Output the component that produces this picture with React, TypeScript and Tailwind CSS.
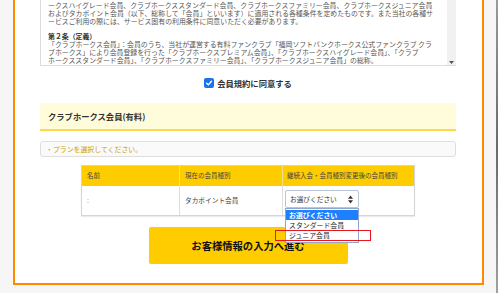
import React from "react";

const jp = { fontFamily: '"Noto Sans CJK JP", "Noto Sans", sans-serif' };

export default function App() {
  return (
    <div className="w-[500px] h-[293px] bg-[#f6f6f6] flex overflow-hidden" style={jp}>
      <div className="w-[13px] shrink-0" />
      <div className="w-[471px] h-[285px] shrink-0 bg-white border-l-2 border-r-2 border-b-2 border-[#ff8a00] box-border px-[25px] pr-[26px] flex flex-col">
        {/* terms box */}
        <div className="h-[66px] shrink-0 flex border-l border-b border-[#dcdcdc] overflow-hidden">
          <div className="flex-1 pl-[7px] pt-[1px] text-[6.9px] leading-[8px] text-[#555] whitespace-nowrap overflow-hidden">
            <div>ークスハイグレード会員、クラブホークススタンダード会員、クラブホークスファミリー会員、クラブホークスジュニア会員</div>
            <div>およびタカポイント会員（以下、総称して「会員」といいます）に適用される各種条件を定めたものです。また当社の各種サ</div>
            <div>ービスご利用の際には、サービス固有の利用条件に同意いただく必要があります。</div>
            <div className="mt-[7px] font-bold text-[#333]">第２条（定義）</div>
            <div>「クラブホークス会員」：会員のうち、当社が運営する有料ファンクラブ「福岡ソフトバンクホークス公式ファンクラブ クラ</div>
            <div>ブホークス」により会員登録を行った「クラブホークスプレミアム会員」、「クラブホークスハイグレード会員」、「クラブ</div>
            <div>ホークススタンダード会員」、「クラブホークスファミリー会員」、「クラブホークスジュニア会員」の総称。</div>
          </div>
          <div className="w-[9px] shrink-0 bg-[#f1f1f1] flex flex-col justify-end items-center pb-[1px]">
            <svg width="5" height="3" viewBox="0 0 5 3"><path d="M0 0 L5 0 L2.5 3 Z" fill="#555" /></svg>
          </div>
        </div>

        {/* agree checkbox */}
        <div className="mt-[11px] h-[12px] flex items-center justify-center gap-[3px]">
          <div className="w-[10px] h-[10px] rounded-[2px] bg-[#1a73e8] flex items-center justify-center">
            <svg width="8" height="8" viewBox="0 0 10 10">
              <path d="M2 5.2 L4.2 7.3 L8 2.8" stroke="white" strokeWidth="1.8" fill="none" strokeLinecap="round" strokeLinejoin="round" />
            </svg>
          </div>
          <span className="text-[8.3px] font-bold text-[#333] leading-none">会員規約に同意する</span>
        </div>

        {/* yellow header */}
        <div className="mt-[14px] h-[28px] shrink-0 bg-[#fffcdc] border-b-2 border-[#ffd94a] flex items-center pl-[8px]">
          <span className="text-[8.3px] font-bold text-[#333]">クラブホークス会員(有料)</span>
        </div>

        {/* message */}
        <div className="mt-[10px] h-[16px] shrink-0 bg-[#fafafa] border border-[#dedede] rounded-[3px] flex items-center pl-[5px]">
          <span className="text-[6.9px] text-[#c9a300]">・プランを選択してください。</span>
        </div>

        {/* table */}
        <div className="mt-[8px] mx-auto w-[334px] shrink-0 border border-[#d4d4d4] shadow-[0_1px_1px_rgba(0,0,0,0.08)]">
          <div className="grid grid-cols-[98px_103px_131px] h-[20px] bg-[#ffcc00] text-[6.5px] text-[#444]">
            <div className="flex items-center pl-[5px] border-r border-[#f3df8a]">名前</div>
            <div className="flex items-center pl-[5px] border-r border-[#f3df8a]">現在の会員種別</div>
            <div className="flex items-center pl-[4px]">継続入会・会員種別変更後の会員種別</div>
          </div>
          <div className="grid grid-cols-[98px_103px_131px] h-[29px] bg-white text-[6.7px] text-[#444]">
            <div className="flex items-center pl-[5px] border-r border-[#dedede] text-[#999]">:</div>
            <div className="flex items-center pl-[5px] border-r border-[#dedede]">タカポイント会員</div>
            <div className="pl-[2px] pt-[4px]">
              <div className="relative w-[74px] h-[18px] border border-[#b8c4d8] rounded-[2px] bg-white flex items-center pl-[4px] pr-[5px] justify-between">
                <span className="text-[6.7px] text-[#333]">お選びください</span>
                <svg width="5" height="9" viewBox="0 0 5 9">
                  <path d="M2.5 0.5 L5 3.8 L0 3.8 Z" fill="#333" />
                  <path d="M0 5.2 L5 5.2 L2.5 8.5 Z" fill="#333" />
                </svg>
                <div className="absolute left-[-1px] top-[17px] w-[74px] bg-white border border-[#8fa7cf] z-10 pt-[1px] pb-[2px]">
                  <div className="h-[10px] bg-[#1e7fff] text-white text-[6.9px] flex items-center pl-[3px] font-bold">お選びください</div>
                  <div className="h-[10px] text-[#222] text-[6.9px] flex items-center pl-[3px]">スタンダード会員</div>
                  <div className="h-[10px] text-[#222] text-[6.9px] flex items-center pl-[3px]">ジュニア会員</div>
                  <div className="absolute left-[-11px] top-[21px] w-[96px] h-[11px] border-[1.5px] border-[#e8161c]" />
                </div>
              </div>
            </div>
          </div>
        </div>

        {/* button */}
        <div className="mt-[11px] mx-auto w-[199px] h-[37px] shrink-0 bg-[#ffcc00] rounded-[2px] flex items-center justify-center">
          <span className="text-[10.3px] font-bold text-[#111]">お客様情報の入力へ進む</span>
        </div>
      </div>
      <div className="w-[12px] shrink-0" />
      <div className="w-[2px] h-full shrink-0 bg-gradient-to-b from-[#9a9a9a] via-[#6a6a6a] to-[#a0a0a0]" />
      <div className="flex-1 bg-white" />
    </div>
  );
}
